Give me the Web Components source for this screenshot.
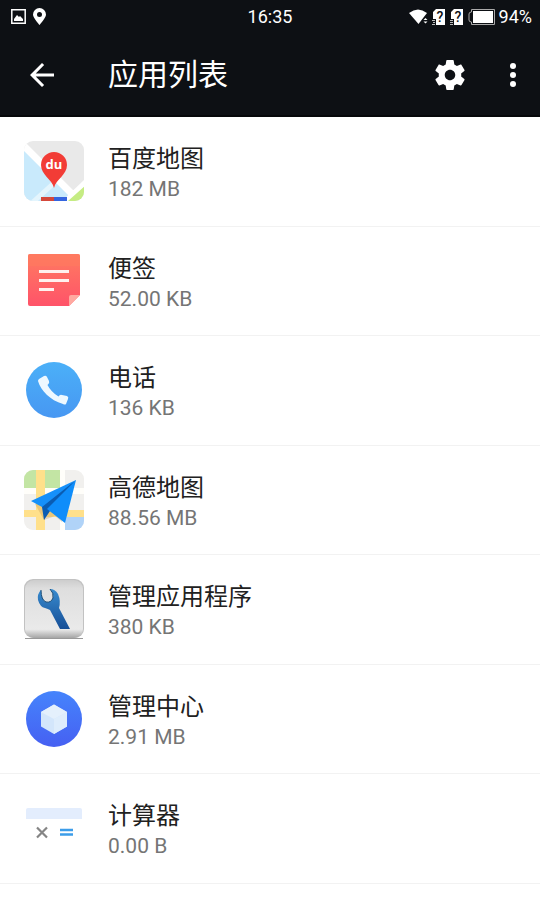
<!DOCTYPE html>
<html lang="zh-CN">
<head>
<meta charset="utf-8">
<meta name="viewport" content="width=device-width, initial-scale=1">
<title>应用列表</title>
<style>
  body {
    margin: 0;
    min-height: 100vh;
    background: #fff;
    color: #212121;
    font-family: Roboto, "Noto Sans CJK SC", sans-serif;
  }
</style>
</head>
<body>
<status-bar time="16:35" battery="94%"></status-bar>
<app-toolbar>应用列表</app-toolbar>
<app-list>
  <app-item name="百度地图" size="182 MB">
    <svg viewBox="0 0 60 60" width="60" height="60" aria-hidden="true">
      <clipPath id="map-clip"><rect width="60" height="60" rx="9"/></clipPath>
      <g clip-path="url(#map-clip)">
        <rect width="60" height="60" fill="#e9e9e9"/>
        <path d="M0 9L46 53L40 60H0Z" fill="#c9eafc"/>
        <path d="M8 62L30 42" stroke="#e4f5fd" stroke-width="5"/>
        <path d="M0 5L50 55M64 40L40 63" stroke="#fff" stroke-width="7"/>
        <path d="M62 44V60H44Z" fill="#c5ec83"/>
        <path d="M17 56H30V60H17Z" fill="#d4483b"/>
        <path d="M30 56H43V60H30Z" fill="#3465e0"/>
      </g>
      <path d="M30 47C28 38 17 34 17 24A13 13 0 0 1 43 24C43 34 32 38 30 47Z" fill="#f23c36"/>
      <text x="30" y="28" text-anchor="middle" font-family="Open Sans, sans-serif" font-size="13" font-weight="700" fill="#fff">du</text>
    </svg>
  </app-item>
  <app-item name="便签" size="52.00 KB">
    <svg viewBox="0 0 60 60" width="60" height="60" aria-hidden="true">
      <linearGradient id="note-fill" x2="0" y2="1">
        <stop stop-color="#ff7b61"/><stop offset="1" stop-color="#ff5369"/>
      </linearGradient>
      <path d="M6 3H54Q56 3 56 5V44L45 55H6Q4 55 4 53V5Q4 3 6 3Z" fill="url(#note-fill)"/>
      <path d="M4 15H56V5Q56 3 54 3H6Q4 3 4 5Z" fill="#ff7960" opacity=".7"/>
      <path d="M45 55V46Q45 44 47 44H56Z" fill="#ffa9a0"/>
      <path d="M15 20.500H45M15 29.500H45M15 38.500H30" stroke="#fff1ee" stroke-width="3"/>
    </svg>
  </app-item>
  <app-item name="电话" size="136 KB">
    <svg viewBox="0 0 60 60" width="60" height="60" aria-hidden="true">
      <linearGradient id="phone-fill" x2="0" y2="1">
        <stop stop-color="#4bb0f8"/><stop offset="1" stop-color="#4797f2"/>
      </linearGradient>
      <circle cx="30" cy="30" r="28" fill="url(#phone-fill)"/>
      <path d="M15 19L20 16Q22 15 23 17L25 21Q26 23 23.500 25Q27 32 34.500 36.500Q36 34 38 35L43 36Q45 37 44 39L42 44Q41 45 39 44C26 40 17 31 14 21Q14 20 15 19Z" fill="#eef8ff"/>
    </svg>
  </app-item>
  <app-item name="高德地图" size="88.56 MB">
    <svg viewBox="0 0 60 60" width="60" height="60" aria-hidden="true">
      <clipPath id="nav-clip"><rect width="60" height="60" rx="9"/></clipPath>
      <g clip-path="url(#nav-clip)">
        <rect width="60" height="60" fill="#f1f0ee"/>
        <path d="M0 0H36V18H0Z" fill="#c3e5a4"/>
        <path d="M41 47H60V60H41Z" fill="#b0d3f8"/>
        <path d="M36 0H41V60H36ZM0 18H60V24H0Z" fill="#fffefa"/>
        <path d="M12 0H21V60H12ZM0 40H60V47H0Z" fill="#ffe08b"/>
      </g>
      <path d="M11 34L20 50L31 46L38 52L50 14Z" fill="#b98d4e" opacity=".3"/>
      <path d="M52 10L7 31L18 37L24 40Z" fill="#1590fa"/>
      <path d="M52 10L18 37L20 50L26 41Z" fill="#0a5cb2"/>
      <path d="M52 10L23 39L41 53Z" fill="#0f8dfa"/>
    </svg>
  </app-item>
  <app-item name="管理应用程序" size="380 KB">
    <svg viewBox="0 0 60 60" width="60" height="60" aria-hidden="true">
      <linearGradient id="tool-fill" x2="0" y2="1">
        <stop stop-color="#cdcdcd"/><stop offset=".15" stop-color="#dedede"/>
        <stop offset=".85" stop-color="#eaeaea"/><stop offset="1" stop-color="#a5a5a5"/>
      </linearGradient>
      <linearGradient id="wrench-fill" x2="0" y2="1">
        <stop stop-color="#388bce"/><stop offset="1" stop-color="#164f97"/>
      </linearGradient>
      <path d="M1 59.500H59" stroke="#999"/>
      <rect width="60" height="59" rx="9" fill="#c2c2c2"/>
      <rect x="1" y="1" width="58" height="58" rx="9" fill="url(#tool-fill)"/>
      <path d="M17 11Q13 15 14 21Q16 28 21 29Q24 30 26 31L36 50H46L35 29Q37 22 34 15Q31 10 26 10Q30 14 29 19Q27 24 22 23Q17 21 17 11Z" fill="url(#wrench-fill)"/>
      <path d="M17 11Q17 21 22 23Q27 24 29 19Q30 14 26 10" fill="none" stroke="#184b76"/>
    </svg>
  </app-item>
  <app-item name="管理中心" size="2.91 MB">
    <svg viewBox="0 0 60 60" width="60" height="60" aria-hidden="true">
      <linearGradient id="center-fill" x2="0" y2="1">
        <stop stop-color="#4584fc"/><stop offset="1" stop-color="#4660f2"/>
      </linearGradient>
      <circle cx="30" cy="30" r="28" fill="url(#center-fill)"/>
      <path d="M30 15.500L43 23V37.500L30 45L17 37.500V23Z" fill="#d3e6fb"/>
      <path d="M30 15.500L43 23L30 30L17 23Z" fill="#e4f0fc"/>
      <path d="M30 30L43 23V37.500L30 45Z" fill="#deedfc"/>
    </svg>
  </app-item>
  <app-item name="计算器" size="0.00 B">
    <svg viewBox="0 0 60 60" width="60" height="60" aria-hidden="true">
      <path d="M4 10H56Q58 10 58 12V21H2V12Q2 10 4 10Z" fill="#e3edfd"/>
      <path d="M13 29.500L23 39.500M23 29.500L13 39.500" stroke="#858585" stroke-width="2.200"/>
      <path d="M36 32H49M36 36.500H49" stroke="#3c9de9" stroke-width="2.500"/>
    </svg>
  </app-item>
</app-list>

<template id="status-bar">
  <style>
    :host {
      display: flex;
      align-items: center;
      height: 33px;
      padding: 0 8px;
      background: #0d1014;
      color: #fff;
      font-size: 18px;
    }
    .side {
      display: flex;
      flex: 1;
      align-items: center;
      gap: 4px;
    }
    .end { justify-content: flex-end; }
    svg { display: block; }
  </style>
  <div class="side">
    <svg width="20" height="18" viewBox="0 0 20 18" aria-hidden="true">
      <path d="M3.800 1.800H17.200V15.200H3.800Z" fill="none" stroke="#fff" stroke-width="1.500"/>
      <path d="M6 13V11L9 7L11 9L12 8L15 11V13Z" fill="#fff"/>
    </svg>
    <svg width="16" height="18" viewBox="0 0 16 18" aria-hidden="true">
      <path d="M7.500 0A6.500 6.500 0 0 0 1 6.500C1 10 7.500 17 7.500 17S14 10 14 6.500A6.500 6.500 0 0 0 7.500 0ZM7.500 4A2.500 2.500 0 1 1 7.500 9A2.500 2.500 0 0 1 7.500 4Z" fill="#fff"/>
    </svg>
  </div>
  <time></time>
  <div class="side end">
    <svg width="20" height="16" viewBox="0 0 20 16" aria-hidden="true">
      <path d="M1 4Q10 -3 19 4L10.500 15Z" fill="#fff"/>
      <path d="M14 11L17 7.500L20 11V12L17 16L14 12Z" fill="#0d1014"/>
      <path d="M15.500 11L17.500 9L19.500 11ZM15.500 12.500H19.500L17.500 14.500Z" fill="#fff"/>
    </svg>
    <svg width="14" height="16" viewBox="0 0 14 16" aria-hidden="true">
      <path d="M4 0H13V16H4V10H1V3Z" fill="#fff"/>
      <path d="M0 11.500H3M1 13.500H3M0 15.500H3" stroke="#bbb"/>
      <text x="8" y="13" text-anchor="middle" font-size="14" font-weight="500" fill="#0d1014">?</text>
    </svg>
    <svg width="14" height="16" viewBox="0 0 14 16" aria-hidden="true">
      <path d="M4 0H13V16H4V10H1V3Z" fill="#fff"/>
      <path d="M0 11.500H3M0 13.500H3M0 15.500H3" stroke="#bbb"/>
      <text x="8" y="13" text-anchor="middle" font-size="14" font-weight="500" fill="#0d1014">?</text>
    </svg>
    <svg width="27" height="16" viewBox="0 0 27 16" aria-hidden="true">
      <path d="M3.500 .5H26.500V15.500H3.500V13Q1 13 1 11V5Q1 3 3.500 3Z" fill="none" stroke="#aaa"/>
      <path d="M5 2H25V14H5Z" fill="#fff"/>
    </svg>
    <span class="battery"></span>
  </div>
</template>

<template id="app-toolbar">
  <style>
    :host {
      display: flex;
      align-items: center;
      height: 84px;
      padding-left: 18px;
      background: #0d1014;
      box-shadow: inset 0 -2px #06080a;
      color: #fff;
    }
    h1 {
      flex: 1;
      margin: 0 0 0 42px;
      font-size: 30px;
      font-weight: 400;
      line-height: 40px;
    }
    button {
      display: flex;
      align-items: center;
      justify-content: center;
      width: 48px;
      height: 48px;
      padding: 0;
      border: 0;
      background: none;
      color: inherit;
    }
    .settings { margin-right: 12px; }
    .more { width: 54px; }
  </style>
  <button class="back" aria-label="返回">
    <svg width="36" height="36" viewBox="0 0 24 24" fill="currentColor"><path d="M20 11H7.830l5.590-5.590L12 4l-8 8 8 8 1.410-1.410L7.830 13H20z"/></svg>
  </button>
  <h1><slot></slot></h1>
  <button class="settings" aria-label="设置">
    <svg width="36" height="36" viewBox="0 0 24 24" fill="currentColor"><path d="M19.430 12.980c.04-.32.07-.64.07-.98s-.03-.66-.07-.98l2.110-1.650c.19-.15.24-.42.12-.64l-2-3.460c-.12-.22-.39-.3-.61-.22l-2.490 1c-.52-.4-1.080-.73-1.690-.98l-.38-2.650C14.460 2.180 14.250 2 14 2h-4c-.25 0-.46.18-.49.42l-.38 2.650c-.61.25-1.170.59-1.690.98l-2.490-1c-.23-.09-.49 0-.61.22l-2 3.460c-.13.22-.07.49.12.64l2.110 1.650c-.04.32-.07.65-.07.98s.03.66.07.98l-2.110 1.650c-.19.15-.24.42-.12.64l2 3.460c.12.22.39.3.61.22l2.490-1c.52.4 1.080.73 1.690.98l.38 2.650c.03.24.24.42.49.42h4c.25 0 .46-.18.49-.42l.38-2.650c.61-.25 1.170-.59 1.690-.98l2.490 1c.23.09.49 0 .61-.22l2-3.460c.12-.22.07-.49-.12-.64l-2.110-1.650zM12 15.500c-1.930 0-3.500-1.570-3.500-3.500s1.570-3.500 3.500-3.500 3.500 1.570 3.500 3.500-1.570 3.500-3.500 3.500z"/></svg>
  </button>
  <button class="more" aria-label="更多">
    <svg width="36" height="36" viewBox="0 0 24 24" fill="currentColor"><circle cx="12" cy="6" r="2"/><circle cx="12" cy="12" r="2"/><circle cx="12" cy="18" r="2"/></svg>
  </button>
</template>

<template id="app-list">
  <style>
    :host { display: block; }
    ::slotted(app-item) { height: 110px; }
    ::slotted(app-item:nth-child(even)) { height: 109px; }
  </style>
  <slot></slot>
</template>

<template id="app-item">
  <style>
    :host {
      display: block;
      box-sizing: border-box;
      border-bottom: 1px solid #f2f2f2;
    }
    button {
      display: flex;
      gap: 24px;
      width: 100%;
      height: 100%;
      padding: 24px;
      border: 0;
      background: none;
      color: inherit;
      font: inherit;
      text-align: left;
    }
    ::slotted(svg) {
      display: block;
      flex: none;
    }
    .text {
      display: flex;
      flex-direction: column;
      min-width: 0;
    }
    .name {
      font-size: 24px;
      line-height: 36px;
    }
    .size {
      color: #757575;
      font-size: 21px;
      line-height: 24px;
    }
  </style>
  <button>
    <slot></slot>
    <span class="text">
      <span class="name"></span>
      <span class="size"></span>
    </span>
  </button>
</template>

<script>
class BaseElement extends HTMLElement {
  constructor() {
    super();
    const template = document.getElementById(this.localName);
    this._shadowRoot = this.attachShadow({ mode: 'open' });
    this._shadowRoot.appendChild(template.content.cloneNode(true));
  }
}

class StatusBar extends BaseElement {
  connectedCallback() {
    this._shadowRoot.querySelector('time').textContent = this.getAttribute('time');
    this._shadowRoot.querySelector('.battery').textContent = this.getAttribute('battery');
  }
}

class AppToolbar extends BaseElement {}

class AppList extends BaseElement {}

class AppItem extends BaseElement {
  connectedCallback() {
    this._shadowRoot.querySelector('.name').textContent = this.getAttribute('name');
    this._shadowRoot.querySelector('.size').textContent = this.getAttribute('size');
  }
}

customElements.define('status-bar', StatusBar);
customElements.define('app-toolbar', AppToolbar);
customElements.define('app-list', AppList);
customElements.define('app-item', AppItem);
</script>
</body>
</html>
